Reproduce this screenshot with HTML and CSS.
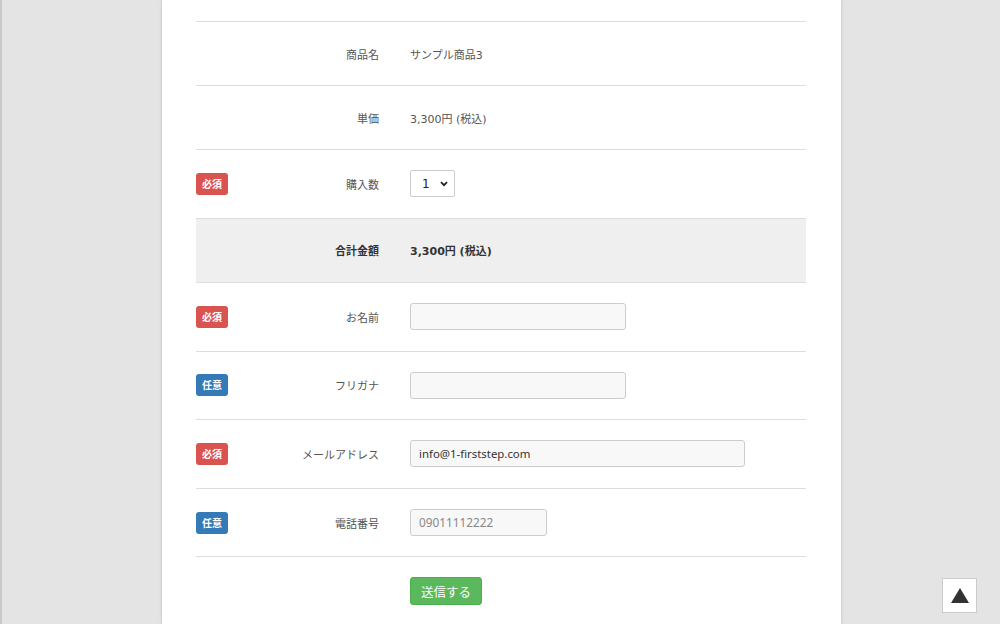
FILE: index.html
```html
<!DOCTYPE html>
<html lang="ja">
<head>
<meta charset="utf-8">
<link rel="stylesheet" href="styles.css">
</head>
<body>
<div class="page">
  <div class="panel">
    <div class="form">
      <div class="row">
        <div class="label"><span class="name">商品名</span></div>
        <div class="value">サンプル商品3</div>
      </div>
      <div class="row">
        <div class="label"><span class="name">単価</span></div>
        <div class="value">3,300円 (税込)</div>
      </div>
      <div class="row row-field">
        <div class="label"><span class="badge req">必須</span><span class="name">購入数</span></div>
        <div class="value"><div class="select"><span>1</span><svg width="8" height="6" viewBox="0 0 8 6"><path d="M1 1.2 L4 4.2 L7 1.2" fill="none" stroke="#222" stroke-width="1.8"/></svg></div></div>
      </div>
      <div class="row total">
        <div class="label"><span class="name">合計金額</span></div>
        <div class="value">3,300円 (税込)</div>
      </div>
      <div class="row row-field">
        <div class="label"><span class="badge req">必須</span><span class="name">お名前</span></div>
        <div class="value"><div class="input w-name"></div></div>
      </div>
      <div class="row row-field">
        <div class="label"><span class="badge opt">任意</span><span class="name">フリガナ</span></div>
        <div class="value"><div class="input w-name"></div></div>
      </div>
      <div class="row row-field">
        <div class="label"><span class="badge req">必須</span><span class="name">メールアドレス</span></div>
        <div class="value"><div class="input w-mail">info@1-firststep.com</div></div>
      </div>
      <div class="row row-field">
        <div class="label"><span class="badge opt">任意</span><span class="name">電話番号</span></div>
        <div class="value"><div class="input w-tel placeholder">09011112222</div></div>
      </div>
      <div class="submit-row">
        <button class="submit">送信する</button>
      </div>
    </div>
  </div>
</div>
<div class="totop"><svg width="18" height="15" viewBox="0 0 18 15"><path d="M9 0 L18 15 L0 15 Z" fill="#333"/></svg></div>
</body>
</html>
```

FILE: styles.css
```css
html, body {
  margin: 0;
  padding: 0;
  height: 100%;
  overflow: hidden;
}
body {
  background: #e4e4e4;
  font-family: "DejaVu Sans", "Noto Sans CJK JP", sans-serif;
  color: #555;
  font-size: 11px;
  border-left: 2px solid #c8c8c8;
  box-sizing: border-box;
}
.page {
  display: flex;
  justify-content: flex-start;
  padding-left: 160px;
  height: 100%;
}
.panel {
  width: 679px;
  background: #fff;
  box-shadow: 0 0 3px rgba(0,0,0,0.18);
  padding: 21px 35px 0 34px;
  box-sizing: border-box;
  height: 100%;
}
.form {
  border-top: 1px solid #ddd;
}
.row {
  display: flex;
  align-items: center;
  border-bottom: 1px solid #ddd;
  height: 64px;
  box-sizing: border-box;
}
.row-field {
  height: 68.6px;
}
.row.total {
  background: #efefef;
  font-weight: bold;
  color: #333;
  height: 64.4px;
}
.label {
  width: 199px;
  flex: none;
  display: flex;
  align-items: center;
  padding-right: 16px;
  box-sizing: border-box;
}
.name {
  margin-left: auto;
}
.value {
  padding-left: 15px;
}
.badge {
  display: inline-block;
  width: 32px;
  height: 22px;
  line-height: 22px;
  border-radius: 3px;
  color: #fff;
  font-size: 10px;
  text-align: center;
  font-weight: bold;
  font-family: "Noto Sans CJK JP", sans-serif;
}
.badge.req { background: #d9534f; }
.badge.opt { background: #337ab7; }
.select {
  width: 45px;
  height: 27px;
  box-sizing: border-box;
  border: 1px solid #ccc;
  border-radius: 2px;
  display: flex;
  align-items: center;
  justify-content: space-between;
  padding: 0 6px 0 11px;
  color: #222;
  font-size: 12px;
  background: #fff;
}
.input {
  height: 27px;
  box-sizing: border-box;
  border: 1px solid #ccc;
  border-radius: 3px;
  background: #f8f8f8;
  padding: 0 8px;
  line-height: 25px;
  font-family: "Noto Sans", "Noto Sans CJK JP", sans-serif;
  font-size: 11.4px;
  color: #333;
}
.w-name { width: 216px; }
.w-mail { width: 335px; }
.w-tel { width: 137px; }
.placeholder { color: #888; font-size: 11.8px; }
.submit-row {
  padding: 20px 0 0 214px;
}
.submit {
  width: 72px;
  height: 28px;
  border: 1px solid #4cae4c;
  border-radius: 3px;
  background: #5cb85c;
  color: #fff;
  font-family: "Noto Sans CJK JP", sans-serif;
  font-size: 12.5px;
  padding: 0;
}
.totop {
  position: fixed;
  left: 942px;
  top: 578px;
  width: 35px;
  height: 35px;
  box-sizing: border-box;
  background: #fff;
  border: 1px solid #ccc;
  display: flex;
  align-items: center;
  justify-content: center;
}
```
